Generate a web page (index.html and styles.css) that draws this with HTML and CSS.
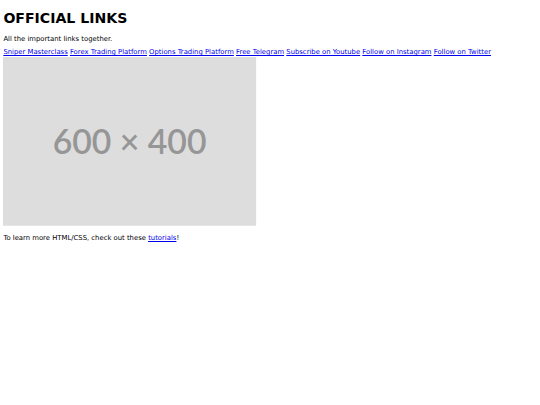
FILE: index.html
```html
<!DOCTYPE html>
<html>
<head>
<meta charset="utf-8">
<title>Official Links</title>
<link rel="stylesheet" href="styles.css">
</head>
<body>
<h1 class="title">OFFICIAL LINKS</h1>
<p class="intro">All the important links together.</p>
<p class="links">
<a href="#">Sniper Masterclass</a>
<a href="#">Forex Trading Platform</a>
<a href="#">Options Trading Platform</a>
<a href="#">Free Telegram</a>
<a href="#">Subscribe on Youtube</a>
<a href="#">Follow on Instagram</a>
<a href="#">Follow on Twitter</a>
</p>
<div class="figure">
<svg class="placeholder" width="253.125" height="168.75" viewBox="0 0 600 400" xmlns="http://www.w3.org/2000/svg"><rect width="600" height="400" fill="#dddddd"/><text x="300" y="231" text-anchor="middle" class="ph-text">600 × 400</text></svg>
</div>
<p class="outro">To learn more HTML/CSS, check out these <a href="#">tutorials</a>!</p>
</body>
</html>
```
FILE: styles.css
```css
html, body {
  background: #ffffff;
}
body {
  margin: 0;
  padding: 0 3.375px;
  font-family: "DejaVu Sans", Verdana, sans-serif;
  font-size: 6.85px;
  line-height: 8px;
  color: #000000;
}
.title {
  font-size: 14.1px;
  line-height: 16px;
  font-weight: bold;
  margin: 10.15px 0 0;
}
.intro {
  margin: 8.48px 0 0;
}
.links {
  margin: 5.7px 0 0;
}
.links a,
.outro a {
  color: #0000ee;
  text-decoration: underline;
}
.figure {
  margin-top: 0.97px;
}
.placeholder {
  display: block;
}
.ph-text {
  font-family: "Lato", sans-serif;
  font-size: 80px;
  font-weight: 600;
  fill: #969696;
}
.outro {
  margin: 7.9px 0 0;
}
```
